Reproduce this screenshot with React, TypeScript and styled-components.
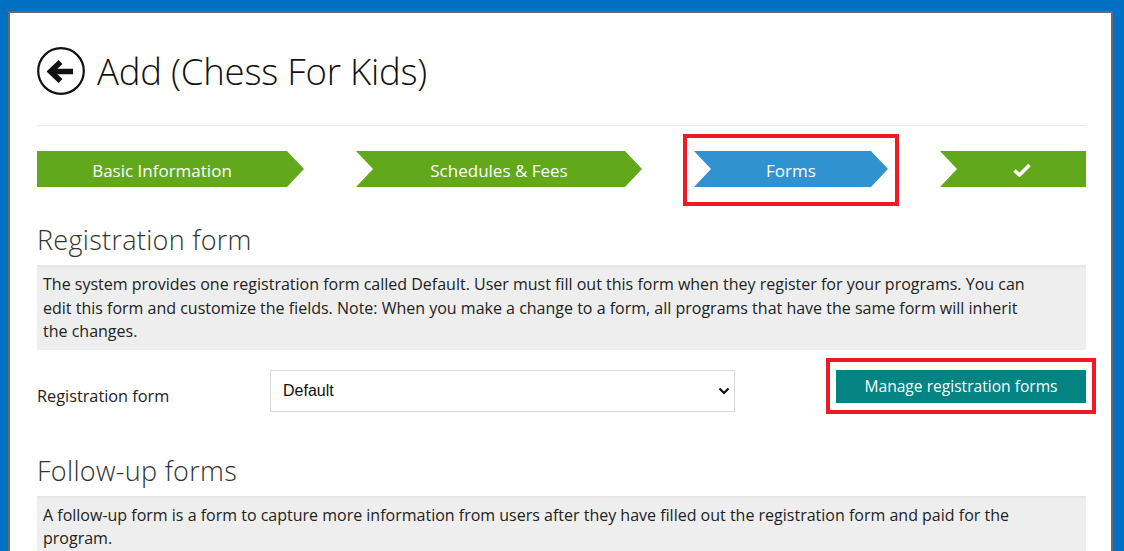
import React from "react";
import styled, { createGlobalStyle } from "styled-components";

const Global = createGlobalStyle`
  html, body { margin: 0; padding: 0; overflow: hidden; background: #0070c2; }
  body { font-family: "Open Sans", "Noto Sans", sans-serif; color: #222; }
  * { box-sizing: border-box; }
`;

const Window = styled.div`
  margin: 11px 11px 0 8px;
  border: 2px solid #666a6e;
  border-bottom: 0;
  background: #fff;
  min-height: 600px;
  padding: 34px 25px 0 27px;
`;

const TitleRow = styled.div`
  display: flex;
  align-items: center;
  gap: 12px;
  height: 48px;
`;

const Title = styled.h1`
  margin: 0;
  font-family: "Open Sans", sans-serif;
  font-weight: 300;
  font-size: 36.5px;
  color: #111;
  letter-spacing: -0.2px;
`;

const Rule = styled.hr`
  border: 0;
  border-top: 1px solid #ececec;
  margin: 30px 0 0;
`;

const Steps = styled.div`
  display: flex;
  gap: 52px;
  margin-top: 25px;
`;

const StepWrap = styled.div<{ $w: number; $marked?: boolean }>`
  position: relative;
  width: ${(p) => p.$w}px;
  flex: none;
  ${(p) =>
    p.$marked
      ? `&::after {
    content: "";
    position: absolute;
    left: -11px; right: -11px; top: -17px; bottom: -19px;
    border: 4px solid #ed1c24;
  }`
      : ""}
`;

const Step = styled.div<{ $first?: boolean; $last?: boolean; $active?: boolean }>`
  height: 36px;
  display: flex;
  align-items: center;
  justify-content: center;
  padding-left: ${(p) => (p.$first ? 0 : 17)}px;
  padding-right: ${(p) => (p.$last ? 0 : 17)}px;
  background: ${(p) => (p.$active ? "#3192d0" : "#61a91a")};
  color: #fff;
  font-size: 17px;
  padding-top: 2px;
  clip-path: ${(p) =>
    p.$first
      ? "polygon(0 0, calc(100% - 17px) 0, 100% 50%, calc(100% - 17px) 100%, 0 100%)"
      : p.$last
      ? "polygon(0 0, 100% 0, 100% 100%, 0 100%, 17px 50%)"
      : "polygon(0 0, calc(100% - 17px) 0, 100% 50%, calc(100% - 17px) 100%, 0 100%, 17px 50%)"};
`;

const SectionTitle = styled.h2<{ $top: number }>`
  margin: ${(p) => p.$top}px 0 0;
  font-family: "Open Sans", sans-serif;
  font-weight: 300;
  font-size: 27px;
  letter-spacing: 0.3px;
  line-height: 30px;
  color: #333;
  padding-bottom: 10px;
  border-bottom: 2px solid #e6e6e6;
`;

const Note = styled.p`
  margin: 0;
  background: #eeeeee;
  padding: 6px 6px;
  font-size: 16px;
  line-height: 23.5px;
  color: #222;
  white-space: nowrap;
`;

const FormRow = styled.div`
  display: grid;
  grid-template-columns: 233px 465px 1fr;
  align-items: start;
  margin-top: 20px;
`;

const Label = styled.label`
  font-size: 16.3px;
  line-height: 22px;
  padding-top: 15px;
  color: #222;
`;

const SelectWrap = styled.div`
  position: relative;
  height: 42px;
`;

const Select = styled.select`
  appearance: none;
  width: 100%;
  height: 42px;
  border: 1px solid #d9d9d9;
  background: #fff;
  padding: 0 12px;
  font-family: "Liberation Sans", Arial, sans-serif;
  font-size: 16px;
  color: #111;
  border-radius: 0;
  outline: none;
`;

const Chevron = styled.svg`
  position: absolute;
  right: 5px;
  top: 17px;
  pointer-events: none;
`;

const ButtonWrap = styled.div`
  justify-self: end;
  position: relative;
  &::after {
    content: "";
    position: absolute;
    left: -10px; right: -10px; top: -12px; bottom: -11px;
    border: 4px solid #ed1c24;
  }
`;

const Button = styled.button`
  display: block;
  width: 250px;
  height: 33px;
  border: 0;
  background: #038382;
  color: #fff;
  font-family: "Open Sans", sans-serif;
  font-size: 15.6px;
  cursor: pointer;
`;

const BackIcon = () => (
  <svg width="48" height="48" viewBox="0 0 48 48">
    <circle cx="24" cy="24" r="22.8" fill="none" stroke="#111" strokeWidth="2.2" />
    <path d="M36 24.5 H15" stroke="#111" strokeWidth="5.5" fill="none" />
    <path d="M23.5 15 L13.5 24.5 L23.5 34" stroke="#111" strokeWidth="5.5" fill="none" strokeLinejoin="miter" />
  </svg>
);

const Check = () => (
  <svg width="18" height="14" viewBox="0 0 18 14">
    <path d="M1.5 7.5 L6.5 12 L16.5 2" stroke="#fff" strokeWidth="3.6" fill="none" />
  </svg>
);

export default function App() {
  return (
    <>
      <Global />
      <Window>
        <TitleRow>
          <BackIcon />
          <Title>Add (Chess For Kids)</Title>
        </TitleRow>
        <Rule />
        <Steps>
          <StepWrap $w={267}>
            <Step $first>Basic Information</Step>
          </StepWrap>
          <StepWrap $w={286}>
            <Step>Schedules &amp; Fees</Step>
          </StepWrap>
          <StepWrap $w={194} $marked>
            <Step $active>Forms</Step>
          </StepWrap>
          <StepWrap $w={146}>
            <Step $last>
              <Check />
            </Step>
          </StepWrap>
        </Steps>

        <SectionTitle $top={38}>Registration form</SectionTitle>
        <Note>
          The system provides one registration form called Default. User must fill out this form when they
          register for your programs. You can
          <br />
          edit this form and customize the fields. Note: When you make a change to a form, all programs that
          have the same form will inherit
          <br />
          the changes.
        </Note>
        <FormRow>
          <Label>Registration form</Label>
          <SelectWrap>
            <Select defaultValue="Default">
              <option>Default</option>
            </Select>
            <Chevron width="12" height="8" viewBox="0 0 12 8">
              <path d="M1.5 1.5 L6 6 L10.5 1.5" stroke="#111" strokeWidth="2.2" fill="none" />
            </Chevron>
          </SelectWrap>
          <ButtonWrap>
            <Button>Manage registration forms</Button>
          </ButtonWrap>
        </FormRow>

        <SectionTitle $top={44}>Follow-up forms</SectionTitle>
        <Note>
          A follow-up form is a form to capture more information from users after they have filled out the
          registration form and paid for the
          <br />
          program.
        </Note>
      </Window>
    </>
  );
}
